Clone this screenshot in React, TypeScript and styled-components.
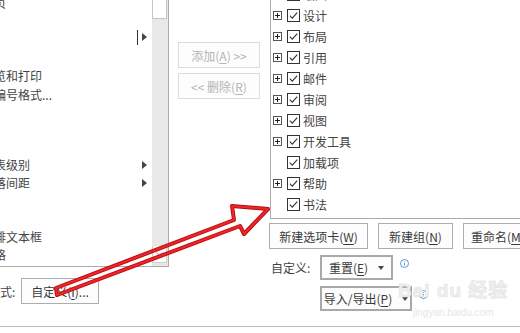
import React from "react";
import styled, { createGlobalStyle } from "styled-components";

const GlobalStyle = createGlobalStyle`
  html, body {
    margin: 0;
    padding: 0;
    background: #fff;
    overflow: hidden;
  }
  body {
    font-family: "Noto Sans CJK SC", "Microsoft YaHei", sans-serif;
  }
`;

const Page = styled.div`
  position: relative;
  width: 520px;
  height: 333px;
  overflow: hidden;
  background: #fff;
  display: flex;
  flex-direction: column;
  font-size: 12px;
  color: #444;
`;

const Main = styled.div`
  display: flex;
  height: 326px;
  flex: none;
`;

const Footer = styled.div`
  flex: 1;
  border-top: 1px solid #bdbdbd;
`;

/* ---------- left column ---------- */

const LeftCol = styled.div`
  flex: none;
  width: 229px;
  margin-left: -60px;
  display: flex;
  flex-direction: column;
`;

const CommandBox = styled.div`
  height: 266px;
  display: flex;
  border-right: 1px solid #ababab;
  border-bottom: 1px solid #ababab;
`;

const CommandList = styled.div`
  flex: 1;
  padding-left: 18px;
  overflow: hidden;
`;

const CommandRow = styled.div<{ $gap: number }>`
  display: flex;
  align-items: center;
  height: 18px;
  margin-top: ${(p) => p.$gap}px;
  padding-right: 5px;
`;

const CommandLabel = styled.span`
  flex: 1;
  white-space: nowrap;
  line-height: 18px;
`;

const Caret = styled.span`
  width: 1px;
  height: 15px;
  background: #333;
  margin-right: 4px;
`;

const SubArrow = styled.span`
  width: 0;
  height: 0;
  border-left: 5px solid #444;
  border-top: 4px solid transparent;
  border-bottom: 4px solid transparent;
`;

const ScrollBar = styled.div`
  width: 16px;
  background: #e8e8e8;
  display: flex;
  flex-direction: column;
`;

const Thumb = styled.div`
  height: 18px;
  margin-right: 1px;
  background: #fff;
  border: 1px solid #c4c4c4;
  border-top: none;
`;

const ScrollSpacer = styled.div`
  flex: 1;
`;

const ScrollArrow = styled.div`
  height: 16px;
  display: flex;
  align-items: center;
  justify-content: center;
  background: #fff;
  border: 1px solid #d0d0d0;
  border-top: none;
  margin-right: 1px;
  margin-bottom: 3px;
`;

const KeyRow = styled.div`
  display: flex;
  align-items: center;
  margin-top: 11px;
`;

const KeyLabel = styled.span`
  width: 71px;
  text-align: right;
  white-space: nowrap;
`;

/* ---------- buttons ---------- */

const Button = styled.div<{ $w: number; $disabled?: boolean }>`
  flex: none;
  width: ${(p) => p.$w}px;
  height: 26px;
  box-sizing: border-box;
  display: flex;
  align-items: center;
  justify-content: center;
  white-space: nowrap;
  background: #fdfdfd;
  border: 1px solid ${(p) => (p.$disabled ? "#dcdcdc" : "#adadad")};
  color: ${(p) => (p.$disabled ? "#b4b4b4" : "#3a3a3a")};
  overflow: hidden;
`;

const ShortcutButton = styled(Button)`
  margin-left: 10px;
`;

const Key = styled.span`
  text-decoration: underline;
  text-underline-offset: 2px;
`;

const MidCol = styled.div`
  flex: none;
  width: 101px;
  box-sizing: border-box;
  padding: 42px 0 0 9px;
  display: flex;
  flex-direction: column;
  gap: 5px;
`;

/* ---------- right column ---------- */

const RightCol = styled.div`
  flex: none;
  width: 300px;
  display: flex;
  flex-direction: column;
`;

const TabBox = styled.div`
  height: 218px;
  border-left: 1px solid #ababab;
  border-bottom: 1px solid #ababab;
  overflow: hidden;
`;

const TabTree = styled.div`
  margin-top: -16px;
  padding-left: 2px;
`;

const TabRow = styled.div`
  display: flex;
  align-items: center;
  height: 21px;
`;

const ExpandSlot = styled.span`
  width: 9px;
  height: 9px;
  margin-right: 5px;
  display: flex;
`;

const CheckSlot = styled.span`
  width: 13px;
  height: 13px;
  margin-right: 3px;
  display: flex;
`;

const TabLabel = styled.span`
  white-space: nowrap;
  color: #444;
`;

const ButtonRow = styled.div`
  display: flex;
  gap: 10px;
  margin: 4px 0 0 -1px;
`;

const OptionRow = styled.div<{ $indent: number }>`
  display: flex;
  align-items: flex-start;
  margin-top: 6px;
  padding-left: ${(p) => p.$indent}px;
`;

const OptionLabel = styled.span`
  width: 49px;
  padding-left: 1px;
  line-height: 25px;
  white-space: nowrap;
`;

const DropButton = styled.div<{ $w: number }>`
  width: ${(p) => p.$w}px;
  height: 25px;
  box-sizing: border-box;
  border: 2px solid #a9a9a9;
  background: #fdfdfd;
  display: flex;
  align-items: center;
  justify-content: center;
  gap: 10px;
  white-space: nowrap;
  color: #3a3a3a;
`;

const DropCaret = styled.span`
  width: 0;
  height: 0;
  border-top: 4px solid #444;
  border-left: 3.5px solid transparent;
  border-right: 3.5px solid transparent;
`;

const InfoSlot = styled.span`
  display: flex;
  margin: 4px 0 0 7px;
`;

/* ---------- overlays ---------- */

const Watermark = styled.div`
  position: absolute;
  left: 398px;
  top: 280px;
  display: flex;
  flex-direction: column;
  align-items: center;
  color: #f0f0f0;
  pointer-events: none;
`;

const MarkTitle = styled.span`
  font-family: "Liberation Sans", "Noto Sans CJK SC", sans-serif;
  font-size: 19px;
  font-weight: bold;
  letter-spacing: 1px;
  line-height: 22px;
  -webkit-text-stroke: 0.6px #e2e2e2;
`;

const MarkUrl = styled.span`
  font-family: "Liberation Sans", sans-serif;
  font-size: 10px;
  line-height: 14px;
  margin-top: 4px;
  color: #e6e6e6;
`;

const ArrowLayer = styled.svg`
  position: absolute;
  left: 0;
  top: 0;
  pointer-events: none;
`;

const Expand = () => (
  <svg width="9" height="9" viewBox="0 0 9 9">
    <rect x="0.5" y="0.5" width="8" height="8" fill="#fff" stroke="#555" />
    <path d="M2 4.5h5M4.5 2v5" stroke="#222" strokeWidth="1" />
  </svg>
);

const Check = () => (
  <svg width="13" height="13" viewBox="0 0 13 13">
    <rect x="0.5" y="0.5" width="12" height="12" fill="#fff" stroke="#333" />
    <path d="M2.8 6.6 5.3 9.1 10.2 3.6" fill="none" stroke="#333" strokeWidth="1.1" />
  </svg>
);

const Info = () => (
  <svg width="9" height="9" viewBox="0 0 9 9">
    <circle cx="4.5" cy="4.5" r="4" fill="#fff" stroke="#5b95d6" />
    <path d="M4.5 4v2.6" stroke="#5b95d6" />
    <circle cx="4.5" cy="2.6" r="0.5" fill="#5b95d6" />
  </svg>
);

const ARROW = "M56 288 L234 220 L232 206 L268 209 L244 234 L240 226 L57 295 Z";

const commands = [
  { text: "插入分页", gap: -6 },
  { text: "字体", gap: 16, caret: true, sub: true },
  { text: "打印预览和打印", gap: 21 },
  { text: "定义新编号格式...", gap: 1 },
  { text: "更改列表级别", gap: 52, sub: true },
  { text: "行和段落间距", gap: 0, sub: true },
  { text: "绘制横排文本框", gap: 36 },
  { text: "插入表格", gap: 0 },
];

const tabs = [
  { text: "绘图", expand: true },
  { text: "设计", expand: true },
  { text: "布局", expand: true },
  { text: "引用", expand: true },
  { text: "邮件", expand: true },
  { text: "审阅", expand: true },
  { text: "视图", expand: true },
  { text: "开发工具", expand: true },
  { text: "加载项", expand: false },
  { text: "帮助", expand: true },
  { text: "书法", expand: false },
];

export default function App() {
  return (
    <>
      <GlobalStyle />
      <Page>
        <Main>
          <LeftCol>
            <CommandBox>
              <CommandList>
                {commands.map((c) => (
                  <CommandRow key={c.text} $gap={c.gap}>
                    <CommandLabel>{c.text}</CommandLabel>
                    {c.caret && <Caret />}
                    {c.sub && <SubArrow />}
                  </CommandRow>
                ))}
              </CommandList>
              <ScrollBar>
                <Thumb />
                <ScrollSpacer />
                <ScrollArrow>
                  <svg width="7" height="4" viewBox="0 0 7 4">
                    <path d="M0.5 0.5 3.5 3.3 6.5 0.5" fill="none" stroke="#9a9a9a" />
                  </svg>
                </ScrollArrow>
              </ScrollBar>
            </CommandBox>
            <KeyRow>
              <KeyLabel>键盘快捷方式:</KeyLabel>
              <ShortcutButton $w={78}>
                自定义(<Key>I</Key>)...
              </ShortcutButton>
            </KeyRow>
          </LeftCol>

          <MidCol>
            <Button $w={82} $disabled>
              添加(<Key>A</Key>)&nbsp;&gt;&gt;
            </Button>
            <Button $w={82} $disabled>
              &lt;&lt;&nbsp;删除(<Key>R</Key>)
            </Button>
          </MidCol>

          <RightCol>
            <TabBox>
              <TabTree>
                {tabs.map((t) => (
                  <TabRow key={t.text}>
                    <ExpandSlot>{t.expand && <Expand />}</ExpandSlot>
                    <CheckSlot>
                      <Check />
                    </CheckSlot>
                    <TabLabel>{t.text}</TabLabel>
                  </TabRow>
                ))}
              </TabTree>
            </TabBox>
            <ButtonRow>
              <Button $w={99}>
                新建选项卡(<Key>W</Key>)
              </Button>
              <Button $w={75}>
                新建组(<Key>N</Key>)
              </Button>
              <Button $w={80}>
                重命名(<Key>M</Key>)...
              </Button>
            </ButtonRow>
            <OptionRow $indent={0}>
              <OptionLabel>自定义:</OptionLabel>
              <DropButton $w={73}>
                <span>
                  重置(<Key>E</Key>)
                </span>
                <DropCaret />
              </DropButton>
              <InfoSlot>
                <Info />
              </InfoSlot>
            </OptionRow>
            <OptionRow $indent={50}>
              <DropButton $w={92}>
                <span>
                  导入/导出(<Key>P</Key>)
                </span>
                <DropCaret />
              </DropButton>
              <InfoSlot>
                <Info />
              </InfoSlot>
            </OptionRow>
          </RightCol>
        </Main>
        <Footer />

        <Watermark>
          <MarkTitle>Bai du 经验</MarkTitle>
          <MarkUrl>jingyan.baidu.com</MarkUrl>
        </Watermark>

        <ArrowLayer width="520" height="333" viewBox="0 0 520 333">
          <path d={ARROW} fill="none" stroke="#b80d10" strokeWidth="4" strokeLinejoin="round" />
          <path d={ARROW} fill="none" stroke="#f0252a" strokeWidth="2" strokeLinejoin="round" />
        </ArrowLayer>
      </Page>
    </>
  );
}
